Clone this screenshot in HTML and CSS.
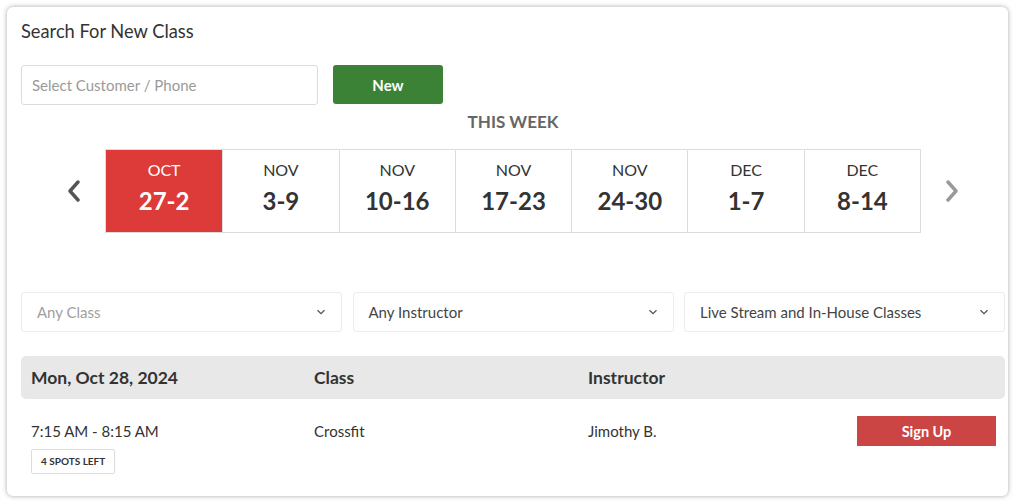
FILE: index.html
```html
<!DOCTYPE html>
<html>
<head>
<meta charset="utf-8">
<link rel="stylesheet" href="styles.css">
</head>
<body>
<div class="card">
  <h1 class="title">Search For New Class</h1>
  <div class="search-row">
    <div class="input">Select Customer / Phone</div>
    <button class="btn-new">New</button>
  </div>
  <div class="week-label">THIS WEEK</div>
  <div class="week-row">
    <span class="chev">
      <svg width="14" height="22" viewBox="0 0 14 22"><path d="M11 2 L3 11 L11 20" fill="none" stroke="#555" stroke-width="3.4" stroke-linecap="round" stroke-linejoin="round"/></svg>
    </span>
    <div class="weeks">
      <div class="wk active"><div class="mon">OCT</div><div class="days">27-2</div></div>
      <div class="wk"><div class="mon">NOV</div><div class="days">3-9</div></div>
      <div class="wk"><div class="mon">NOV</div><div class="days">10-16</div></div>
      <div class="wk"><div class="mon">NOV</div><div class="days">17-23</div></div>
      <div class="wk"><div class="mon">NOV</div><div class="days">24-30</div></div>
      <div class="wk"><div class="mon">DEC</div><div class="days">1-7</div></div>
      <div class="wk"><div class="mon">DEC</div><div class="days">8-14</div></div>
    </div>
    <span class="chev">
      <svg width="14" height="22" viewBox="0 0 14 22"><path d="M3 2 L11 11 L3 20" fill="none" stroke="#999" stroke-width="3.4" stroke-linecap="round" stroke-linejoin="round"/></svg>
    </span>
  </div>
  <div class="filters">
    <div class="select placeholder"><span>Any Class</span><svg class="caret" width="10" height="6" viewBox="0 0 10 6"><path d="M1.5 1.2 L5 4.6 L8.5 1.2" fill="none" stroke="#555" stroke-width="1.3"/></svg></div>
    <div class="select"><span>Any Instructor</span><svg class="caret" width="10" height="6" viewBox="0 0 10 6"><path d="M1.5 1.2 L5 4.6 L8.5 1.2" fill="none" stroke="#555" stroke-width="1.3"/></svg></div>
    <div class="select"><span>Live Stream and In-House Classes</span><svg class="caret" width="10" height="6" viewBox="0 0 10 6"><path d="M1.5 1.2 L5 4.6 L8.5 1.2" fill="none" stroke="#555" stroke-width="1.3"/></svg></div>
  </div>
  <div class="table">
    <div class="thead">
      <div>Mon, Oct 28, 2024</div>
      <div>Class</div>
      <div>Instructor</div>
      <div></div>
    </div>
    <div class="trow">
      <div class="time-cell">
        <div class="time">7:15 AM - 8:15 AM</div>
        <div class="badge">4 SPOTS LEFT</div>
      </div>
      <div class="cell">Crossfit</div>
      <div class="cell">Jimothy B.</div>
      <div class="cell action"><button class="btn-signup">Sign Up</button></div>
    </div>
  </div>
</div>
</body>
</html>
```

FILE: styles.css
```css
* { box-sizing: border-box; }
html, body { margin: 0; padding: 0; }
body {
  background: #ffffff;
  font-family: "Lato", "Liberation Sans", sans-serif;
  color: #333;
  width: 1016px;
  height: 504px;
  overflow: hidden;
}
.card {
  margin: 7px;
  width: 1001px;
  height: 489px;
  background: #fff;
  border-radius: 6px;
  box-shadow: 0 0 5px rgba(0,0,0,0.35);
  padding: 14px 3px 0 14px;
}
.title {
  margin: 0;
  font-size: 18.3px;
  font-weight: 400;
  line-height: 20px;
  color: #333;
}
.search-row {
  display: flex;
  align-items: flex-start;
  margin-top: 24px;
}
.input {
  width: 297px;
  height: 40px;
  border: 1px solid #dcdcdc;
  border-radius: 3px;
  padding: 0 10px;
  display: flex;
  align-items: center;
  font-size: 15px;
  color: #9a9a9a;
}
.btn-new {
  margin-left: 15px;
  width: 110px;
  height: 39px;
  border: none;
  border-radius: 3px;
  background: #3b8237;
  color: #fff;
  font-family: inherit;
  font-size: 15px;
  font-weight: 700;
}
.week-label {
  margin-top: 7px;
  text-align: center;
  font-size: 17px;
  font-weight: 700;
  line-height: 20px;
  color: #666;
}
.week-row {
  margin-top: 17px;
  display: flex;
  justify-content: center;
  align-items: center;
  gap: 24px;
}
.chev { display: flex; width: 14px; height: 22px; }
.weeks {
  display: flex;
  border: 1px solid #dcdcdc;
}
.wk {
  width: 116.3px;
  height: 82px;
  border-left: 1px solid #dcdcdc;
  display: flex;
  flex-direction: column;
  align-items: center;
  padding-top: 10px;
  color: #333;
}
.wk:first-child { border-left: none; }
.wk.active { background: #dd3a3a; color: #fff; }
.mon { font-size: 16px; line-height: 20px; }
.days { font-size: 24px; font-weight: 700; line-height: 30px; margin-top: 6px; }
.filters {
  margin-top: 59px;
  display: grid;
  grid-template-columns: 321px 321px 321px;
  column-gap: 10.5px;
}
.select {
  height: 40px;
  border: 1px solid #ececec;
  border-radius: 3px;
  padding: 0 15px;
  display: flex;
  align-items: center;
  justify-content: space-between;
  font-size: 15px;
  color: #444;
}
.select.placeholder { color: #a0a0a0; }
.table { margin-top: 24px; }
.thead {
  display: grid;
  grid-template-columns: 283px 274px 1fr 149px;
  height: 43px;
  align-items: center;
  background: #e8e8e8;
  border-radius: 5px;
  padding-left: 10px;
  font-size: 17.5px;
  font-weight: 700;
  color: #333;
}
.trow {
  display: grid;
  grid-template-columns: 283px 274px 1fr 149px;
  padding-left: 10px;
  padding-right: 9px;
  padding-top: 17px;
  font-size: 15px;
  color: #333;
}
.time { line-height: 30px; }
.cell { line-height: 30px; }
.action { display: flex; justify-content: flex-end; }
.badge {
  display: inline-block;
  margin-top: 3px;
  border: 1px solid #dcdcdc;
  border-radius: 2px;
  padding: 0 9px;
  height: 25px;
  line-height: 23px;
  font-size: 10px;
  font-weight: 700;
  color: #333;
}
.btn-signup {
  width: 139px;
  height: 30px;
  border: none;
  background: #cc4545;
  color: #fff;
  font-family: inherit;
  font-size: 14.5px;
  font-weight: 700;
}
```
